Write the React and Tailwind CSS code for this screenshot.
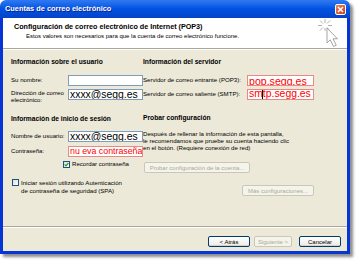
import React from "react";

const Field = ({ value, red, w, size = "text-[10.4px]" }) => (
  <div
    className={`h-[11px] ${w} shrink-0 bg-white border ${
      red ? "border-[#e58a8a]" : "border-[#7f9db9]"
    } flex items-center overflow-hidden`}
  >
    {value ? (
      <span
        className={`pl-[1px] ${size} leading-[10px] whitespace-nowrap ${
          red ? "text-[#ff0000]" : "text-black"
        }`}
      >
        {value}
      </span>
    ) : null}
  </div>
);

const Heading = ({ children, className = "" }) => (
  <div className={`h-[8px] text-[6.7px] leading-[8px] font-bold text-black whitespace-nowrap ${className}`}>
    {children}
  </div>
);

const XpButton = ({ children, disabled, w }) => (
  <div
    className={`h-[11px] ${w} shrink-0 rounded-[2px] border flex items-center justify-center text-[6px] leading-none whitespace-nowrap ${
      disabled
        ? "border-[#c9c7ba] bg-[#f5f4ea] text-[#aca899]"
        : "border-[#003c74] bg-gradient-to-b from-white to-[#ecebe6] text-black shadow-[inset_0_-1px_0_#d6d0c5]"
    }`}
  >
    {children}
  </div>
);

const Checkbox = ({ checked }) => (
  <div className="w-[7px] h-[7px] shrink-0 border border-[#1c5180] bg-gradient-to-br from-[#dcdcd7] to-white flex items-center justify-center">
    {checked && (
      <svg width="5" height="5" viewBox="0 0 5 5">
        <path d="M0.6 2.4 L2 3.8 L4.4 1" stroke="#21a121" strokeWidth="1.2" fill="none" />
      </svg>
    )}
  </div>
);

const CursorIcon = () => (
  <svg width="28" height="30" viewBox="0 0 28 30">
    <g stroke="#a8a8a8" strokeWidth="0.9" fill="none">
      <line x1="10" y1="1" x2="10" y2="5" />
      <line x1="10" y1="10" x2="10" y2="13" />
      <line x1="3" y1="7.5" x2="7" y2="7.5" />
      <line x1="13" y1="7.5" x2="17" y2="7.5" />
      <line x1="5" y1="2.5" x2="8" y2="5.5" />
      <line x1="12" y1="9.5" x2="14" y2="11.5" />
      <line x1="15" y1="2.5" x2="12" y2="5.5" />
      <line x1="5" y1="12.5" x2="8" y2="9.5" />
    </g>
    <path
      d="M12 10 L12 25 L15.2 21.8 L18.5 28.5 L21.3 27.3 L18 20.8 L22.5 20.8 Z"
      fill="#ffffff"
      stroke="#9a9a9a"
      strokeWidth="0.9"
      strokeLinejoin="round"
    />
  </svg>
);

export default function App() {
  return (
    <div className="w-[360px] h-[265px] bg-white font-['Liberation_Sans',Arial,sans-serif] overflow-hidden">
      <div className="w-[350px] h-[254px] flex flex-col rounded-t-[6px] shadow-[3px_3px_3px_rgba(0,0,0,0.45)]">
        {/* title bar */}
        <div className="h-[18px] shrink-0 rounded-t-[6px] bg-gradient-to-b from-[#2f7af2] via-[#0152e2] to-[#0443c8] flex items-center pl-[5px] pr-[4px]">
          <span className="text-[7.4px] font-bold text-white leading-none [text-shadow:1px_1px_0_#0a1e8c]">
            Cuentas de correo electrónico
          </span>
          <div className="ml-auto w-[11px] h-[11px] rounded-[2px] border border-white bg-gradient-to-br from-[#e8805a] to-[#c8401a] flex items-center justify-center">
            <svg width="7" height="7" viewBox="0 0 7 7">
              <path d="M1 1 L6 6 M6 1 L1 6" stroke="white" strokeWidth="1.4" />
            </svg>
          </div>
        </div>

        {/* body with borders */}
        <div className="flex-1 flex flex-col border-x-[3px] border-b-[3px] border-[#0535d6] bg-[#ece9d8]">
          {/* header */}
          <div className="h-[30px] shrink-0 bg-white flex">
            <div className="pl-[11px] pt-[5px]">
              <div className="text-[7.2px] font-bold leading-[8px] text-black whitespace-nowrap">
                Configuración de correo electrónico de Internet (POP3)
              </div>
              <div className="pl-[12px] mt-[1px] text-[6px] leading-[8px] text-black whitespace-nowrap">
                Estos valores son necesarios para que la cuenta de correo electrónico funcione.
              </div>
            </div>
            <div className="ml-auto mr-[4px]">
              <CursorIcon />
            </div>
          </div>
          <div className="h-[1px] bg-[#aca899]" />
          <div className="h-[1px] bg-white" />

          {/* main */}
          <div className="h-[176px] shrink-0 flex text-[6.1px] text-black">
            {/* left column */}
            <div className="w-[140px] shrink-0 pl-[8px] flex flex-col">
              <Heading className="mt-[8px]">Información sobre el usuario</Heading>
              <div className="mt-[9px] h-[11px] flex items-center">
                <span className="w-[59px] leading-none">Su nombre:</span>
                <Field w="w-[75px]" />
              </div>
              <div className="mt-[3px] h-[13px] flex items-start">
                <span className="w-[59px] mt-[1px] leading-[6.5px]">
                  Dirección de correo
                  <br />
                  electrónico:
                </span>
                <Field w="w-[75px]" value="xxxx@segg.es" />
              </div>
              <Heading className="mt-[13px]">Información de inicio de sesión</Heading>
              <div className="mt-[8px] h-[11px] flex items-center">
                <span className="w-[59px] leading-none">Nombre de usuario:</span>
                <Field w="w-[75px]" value="xxxx@segg.es" />
              </div>
              <div className="mt-[4px] h-[11px] flex items-center">
                <span className="w-[59px] leading-none">Contraseña:</span>
                <div className="h-[11px] w-[75px] shrink-0 bg-white border border-[#e58a8a] flex items-center overflow-hidden">
                  <span className="pl-[1px] text-[8.8px] leading-none text-[#ff0000] whitespace-nowrap">
                    nu eva contraseña
                  </span>
                </div>
              </div>
              <div className="mt-[4px] h-[7px] flex items-center pl-[52px] gap-[2px]">
                <Checkbox checked />
                <span className="leading-none whitespace-nowrap">Recordar contraseña</span>
              </div>
              <div className="mt-[11px] flex items-start pl-[1px] gap-[2px]">
                <Checkbox />
                <span className="leading-[8px] -mt-[0.5px] whitespace-nowrap">
                  Iniciar sesión utilizando Autenticación
                  <br />
                  de contraseña de seguridad (SPA)
                </span>
              </div>
            </div>

            {/* right column */}
            <div className="flex-1 flex flex-col">
              <Heading className="mt-[8px]">Información del servidor</Heading>
              <div className="mt-[9px] h-[11px] flex items-center">
                <span className="w-[104px] leading-none whitespace-nowrap">Servidor de correo entrante (POP3):</span>
                <Field w="w-[67px]" red value="pop.segg.es" size="text-[10.6px]" />
              </div>
              <div className="mt-[3px] h-[11px] flex items-center">
                <span className="w-[104px] leading-none whitespace-nowrap">Servidor de correo saliente (SMTP):</span>
                <div className="h-[11px] w-[67px] shrink-0 bg-white border border-[#e58a8a] flex items-center overflow-hidden">
                  <span className="pl-[1px] text-[10.4px] leading-[10px] text-[#ff0000] whitespace-nowrap">
                    sm<span className="inline-block w-[1px] h-[11px] bg-black align-middle -mx-[0.5px]" />tp.segg.es
                  </span>
                </div>
              </div>
              <Heading className="mt-[14px]">Probar configuración</Heading>
              <div className="mt-[8px] leading-[7px] whitespace-nowrap">
                Después de rellenar la información de esta pantalla,
                <br />
                le recomendamos que pruebe su cuenta haciendo clic
                <br />
                en el botón. (Requiere conexión de red)
              </div>
              <div className="mt-[11px] pl-[1px]">
                <XpButton disabled w="w-[106px]">
                  Probar configuración de la cuenta...
                </XpButton>
              </div>
              <div className="mt-[12px] pl-[99px]">
                <XpButton disabled w="w-[72px]">
                  Más configuraciones...
                </XpButton>
              </div>
            </div>
          </div>

          <div className="h-[1px] bg-[#aca899]" />
          <div className="h-[1px] bg-white" />

          {/* footer */}
          <div className="flex-1 flex items-start justify-end pt-[8px] pr-[6px]">
            <XpButton w="w-[42px]">&lt; Atrás</XpButton>
            <div className="ml-[4px]">
              <XpButton disabled w="w-[38px]">
                Siguiente &gt;
              </XpButton>
            </div>
            <div className="ml-[7px]">
              <XpButton w="w-[42px]">Cancelar</XpButton>
            </div>
          </div>
        </div>
      </div>
    </div>
  );
}
